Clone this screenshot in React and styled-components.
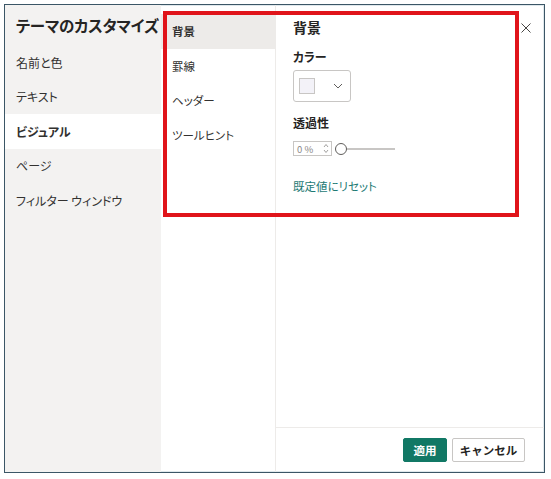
import styled, { createGlobalStyle } from "styled-components";

const GlobalStyle = createGlobalStyle`
  html, body {
    margin: 0;
    padding: 0;
    background: #ffffff;
  }
  body {
    font-family: "Noto Sans CJK JP", "Noto Sans", sans-serif;
    color: #323130;
    font-feature-settings: "palt";
  }
`;

const Dialog = styled.div`
  position: relative;
  box-sizing: border-box;
  margin: 4px 0 0 4px;
  width: 541px;
  height: 469px;
  border: 1px solid #3b5666;
  box-shadow: inset 0 0 0 1px #dfe8ec;
  display: grid;
  grid-template-columns: 156px 115px 1fr;
  background: #fff;
`;

const Sidebar = styled.nav`
  background: #f3f2f1;
  display: flex;
  flex-direction: column;
`;

const Title = styled.h1`
  margin: 0;
  height: 40px;
  display: flex;
  align-items: center;
  padding-left: 11px;
  font-size: 15.5px;
  font-weight: 700;
  color: #252423;
  white-space: nowrap;
  letter-spacing: -0.2px;
`;

const NavItem = styled.div`
  height: 34.5px;
  display: flex;
  align-items: center;
  padding-left: 11px;
  font-size: 12px;
  color: #323130;
  background: ${(p) => (p.$active ? "#ffffff" : "transparent")};
  font-weight: ${(p) => (p.$active ? 700 : 400)};
`;

const SubNav = styled.div`
  box-sizing: border-box;
  border-right: 1px solid #edebe9;
  padding-top: 9px;
  display: flex;
  flex-direction: column;
`;

const SubItem = styled.div`
  height: 34.5px;
  display: flex;
  align-items: center;
  padding-left: 11px;
  font-size: 11.5px;
  color: #323130;
  background: ${(p) => (p.$active ? "#edebe9" : "transparent")};
  font-weight: ${(p) => (p.$active ? 600 : 400)};
`;

const Panel = styled.section`
  display: flex;
  flex-direction: column;
  position: relative;
`;

const PanelBody = styled.div`
  flex: 1;
  padding: 12px 17px 0;
  display: flex;
  flex-direction: column;
  align-items: flex-start;
`;

const PanelTitle = styled.h2`
  margin: 0;
  font-size: 14px;
  font-weight: 700;
  line-height: 20px;
  color: #252423;
`;

const Label = styled.div`
  font-size: 12px;
  font-weight: 700;
  line-height: 16px;
  color: #252423;
  margin-top: ${(p) => p.$top}px;
`;

const ColorPicker = styled.div`
  box-sizing: border-box;
  margin-top: 5px;
  width: 58px;
  height: 32px;
  border: 1px solid #c8c6c4;
  border-radius: 3px;
  display: flex;
  align-items: center;
  justify-content: space-between;
  padding: 0 7px 0 5px;
`;

const Swatch = styled.span`
  box-sizing: border-box;
  width: 16px;
  height: 16px;
  border: 1px solid #c8c6c4;
  background: #f3f2f8;
`;

const SliderRow = styled.div`
  display: flex;
  align-items: center;
  margin-top: 10px;
`;

const SpinBox = styled.div`
  box-sizing: border-box;
  width: 39px;
  height: 15px;
  border: 1px solid #c8c6c4;
  display: flex;
  align-items: center;
  justify-content: space-between;
  padding: 0 2px 0 3px;
  font-size: 9.5px;
  color: #8a8886;
`;

const Track = styled.div`
  position: relative;
  width: 60px;
  height: 12px;
  margin-left: 3px;
  display: flex;
  align-items: center;

  &::before {
    content: "";
    flex: 1;
    height: 2px;
    background: #c8c6c4;
  }
`;

const Thumb = styled.span`
  position: absolute;
  left: 0;
  top: 0;
  box-sizing: border-box;
  width: 12px;
  height: 12px;
  border: 1px solid #605e5c;
  border-radius: 50%;
  background: #fff;
`;

const ResetLink = styled.a`
  margin-top: 22px;
  font-size: 11.5px;
  color: #1d7a74;
  text-decoration: none;
`;

const CloseButton = styled.button`
  position: absolute;
  top: 16px;
  right: 11px;
  border: none;
  background: none;
  padding: 2px;
  display: flex;
  cursor: pointer;
`;

const Footer = styled.div`
  height: 44px;
  border-top: 1px solid #edebe9;
  display: flex;
  align-items: center;
  justify-content: flex-end;
  gap: 5px;
  padding-right: 19px;
`;

const Button = styled.button`
  box-sizing: border-box;
  height: 24px;
  padding: 0;
  font-family: inherit;
  font-size: 11.5px;
  font-weight: 700;
  border-radius: 2px;
  border: 1px solid ${(p) => (p.$primary ? "#117865" : "#c8c6c4")};
  background: ${(p) => (p.$primary ? "#117865" : "#ffffff")};
  color: ${(p) => (p.$primary ? "#ffffff" : "#252423")};
  width: ${(p) => (p.$primary ? 44 : 73)}px;
`;

const Highlight = styled.div`
  position: absolute;
  left: 158px;
  top: 6px;
  width: 356px;
  height: 206px;
  box-sizing: border-box;
  border: 4px solid #e0141a;
  pointer-events: none;
`;

const Chevron = () => (
  <svg width="10" height="6" viewBox="0 0 10 6">
    <path d="M1 1l4 4 4-4" fill="none" stroke="#605e5c" strokeWidth="1" />
  </svg>
);

const Spinner = () => (
  <svg width="6" height="11" viewBox="0 0 6 11">
    <path d="M1 4l2-2.5L5 4M1 7l2 2.5L5 7" fill="none" stroke="#8a8886" strokeWidth="0.8" />
  </svg>
);

const mainItems = ["名前と色", "テキスト", "ビジュアル", "ページ", "フィルター ウィンドウ"];
const subItems = ["背景", "罫線", "ヘッダー", "ツールヒント"];

export default function App() {
  return (
    <>
      <GlobalStyle />
      <Dialog>
        <Sidebar>
          <Title>テーマのカスタマイズ</Title>
          {mainItems.map((item) => (
            <NavItem key={item} $active={item === "ビジュアル"}>
              {item}
            </NavItem>
          ))}
        </Sidebar>
        <SubNav>
          {subItems.map((item) => (
            <SubItem key={item} $active={item === "背景"}>
              {item}
            </SubItem>
          ))}
        </SubNav>
        <Panel>
          <CloseButton aria-label="閉じる">
            <svg width="10" height="10" viewBox="0 0 10 10">
              <path d="M0.5 0.5l9 9M9.5 0.5l-9 9" stroke="#484644" strokeWidth="1" />
            </svg>
          </CloseButton>
          <PanelBody>
            <PanelTitle>背景</PanelTitle>
            <Label $top={12}>カラー</Label>
            <ColorPicker>
              <Swatch />
              <Chevron />
            </ColorPicker>
            <Label $top={13}>透過性</Label>
            <SliderRow>
              <SpinBox>
                <span>0 %</span>
                <Spinner />
              </SpinBox>
              <Track>
                <Thumb />
              </Track>
            </SliderRow>
            <ResetLink href="#">既定値にリセット</ResetLink>
          </PanelBody>
          <Footer>
            <Button $primary>適用</Button>
            <Button>キャンセル</Button>
          </Footer>
        </Panel>
        <Highlight />
      </Dialog>
    </>
  );
}
